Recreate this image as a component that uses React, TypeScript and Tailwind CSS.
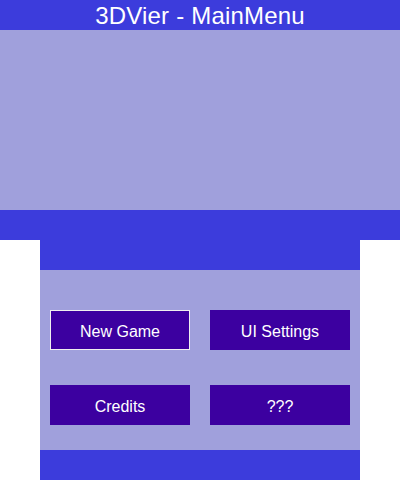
import React from "react";

type MenuButtonProps = {
  label: string;
  selected?: boolean;
};

function MenuButton({ label, selected }: MenuButtonProps) {
  return (
    <button
      className={
        "flex h-[40px] w-[140px] items-center justify-center bg-[#3c00a0] pt-[3px] text-[16px] leading-none text-white " +
        (selected ? "border border-[#f0f0f0]" : "border border-[#3c00a0]")
      }
    >
      {label}
    </button>
  );
}

export default function App() {
  return (
    <div
      className="flex w-[400px] flex-col bg-white"
      style={{ fontFamily: '"Liberation Sans", Arial, sans-serif' }}
    >
      {/* Top screen */}
      <div className="flex h-[240px] w-[400px] flex-col">
        <div className="flex h-[30px] items-center justify-center bg-[#3c3cdc] pt-[1px] text-[24px] leading-none tracking-[0.2px] text-white">
          3DVier - MainMenu
        </div>
        <div className="h-[180px] bg-[#a0a0dc]" />
        <div className="h-[30px] bg-[#3c3cdc]" />
      </div>

      {/* Bottom screen */}
      <div className="mx-auto flex h-[240px] w-[320px] flex-col">
        <div className="h-[30px] bg-[#3c3cdc]" />
        <div className="flex h-[180px] flex-col gap-[35px] bg-[#a0a0dc] px-[10px] pt-[40px]">
          <div className="flex gap-[20px]">
            <MenuButton label="New Game" selected />
            <MenuButton label="UI Settings" />
          </div>
          <div className="flex gap-[20px]">
            <MenuButton label="Credits" />
            <MenuButton label="???" />
          </div>
        </div>
        <div className="h-[30px] bg-[#3c3cdc]" />
      </div>
    </div>
  );
}
